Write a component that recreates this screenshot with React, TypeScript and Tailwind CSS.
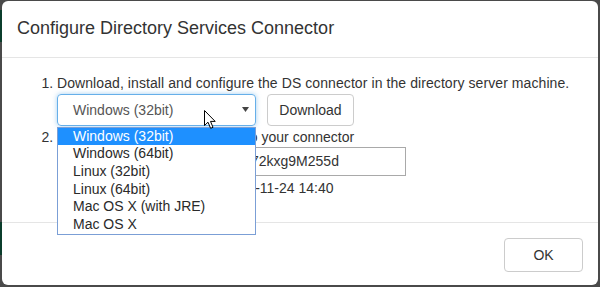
import React from "react";

const options = [
  "Windows (32bit)",
  "Windows (64bit)",
  "Linux (32bit)",
  "Linux (64bit)",
  "Mac OS X (with JRE)",
  "Mac OS X",
];

export default function App() {
  return (
    <div
      className="relative w-[600px] h-[287px] bg-[#4a4a4a] pt-[1px] pl-[2px] pr-[2px] pb-[2px] overflow-hidden"
      style={{ fontFamily: '"Liberation Sans", Arial, sans-serif' }}
    >
      <div className="absolute left-0 top-[10px] w-[2px] h-[32px] bg-[#0b3d2c]" />
      <div className="absolute left-0 top-[222px] w-[2px] h-[33px] bg-[#0b3d2c]" />
      <div className="relative h-full bg-white rounded-[6px] flex flex-col text-[#333] text-[14px] leading-5">
        {/* header */}
        <div className="px-[15px] py-[15px] border-b border-[#e5e5e5]">
          <h4 className="text-[18px] leading-[25.7px] text-[#333]">
            Configure Directory Services Connector
          </h4>
        </div>
        {/* body */}
        <div className="px-[15px] pt-[15px] pb-[24px]">
          <ol className="list-decimal pl-10">
            <li>
              <div className="tracking-[0.08px]">
                Download, install and configure the DS connector in the directory server machine.
              </div>
              <div className="flex items-start gap-[11px] mt-[1px]">
                <div className="relative">
                  <div className="w-[199px] h-8 rounded-[4px] border border-[#66afe9] shadow-[0_0_5px_rgba(102,175,233,0.6)] flex items-center pl-[15px] pr-[6px] text-[#555]">
                    <span className="flex-1">Windows (32bit)</span>
                    <svg width="7" height="5" viewBox="0 0 7 5" className="mb-[1px]">
                      <path d="M0 0 L7 0 L3.5 5 Z" fill="#444" />
                    </svg>
                  </div>
                  {/* dropdown list */}
                  <div className="absolute left-0 top-[33px] w-[199px] border border-[#7b9fd6] bg-white z-10">
                    {options.map((o, i) => (
                      <div
                        key={o}
                        className={
                          "pl-[15px] leading-[17.67px] h-[17.67px] " +
                          (i === 0 ? "bg-[#1e90ff] text-white" : "text-[#2a2a2a]")
                        }
                      >
                        {o}
                      </div>
                    ))}
                  </div>
                  {/* cursor */}
                  <svg
                    width="13"
                    height="20"
                    viewBox="0 0 13 20"
                    className="absolute left-[147px] top-[16px] z-20"
                  >
                    <path
                      d="M0.5 0.5 L0.5 15.5 L4 12.2 L6.6 18.3 L9 17.3 L6.5 11.4 L11.2 11.4 Z"
                      fill="#fff"
                      stroke="#000"
                      strokeWidth="1"
                      strokeLinejoin="round"
                    />
                  </svg>
                </div>
                <button className="h-8 w-[87px] rounded-[4px] border border-[#ccc] bg-white text-[#333] text-[14px]">
                  Download
                </button>
              </div>
            </li>
            <li className="mt-[1px]">
              <div>
                Copy the following secret key <span className="ml-[3px]">to your connector</span>
              </div>
              <div className="w-[349px] h-[29px] border border-[#a9a9a9] flex items-center pl-[3px] text-[#333]">
                8e4b0d6ai1hq5n3pu9g2e7o5b72kxg9M255d
              </div>
              <div className="mt-[2px]">
                Your token will expire on: <span className="ml-[8px]">2016-11-24 14:40</span>
              </div>
            </li>
          </ol>
        </div>
        {/* footer */}
        <div className="border-t border-[#e5e5e5] px-[15px] py-[15px] flex justify-end">
          <button className="w-[79px] h-[34px] rounded-[4px] border border-[#ccc] bg-white text-[#333] text-[14px]">
            OK
          </button>
        </div>
      </div>
    </div>
  );
}
